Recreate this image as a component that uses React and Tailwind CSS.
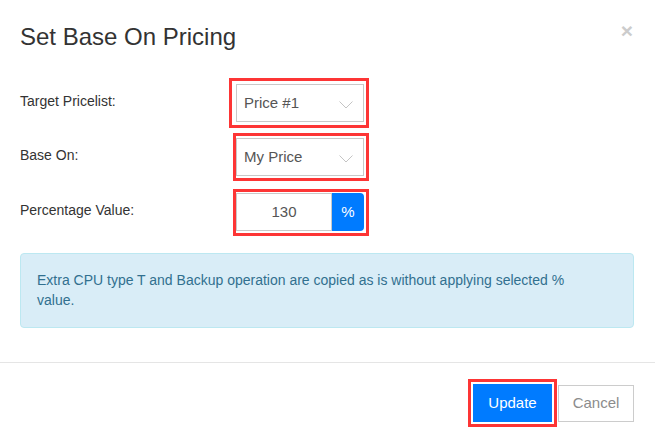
import React from "react";

function Chevron() {
  return (
    <svg width="14" height="8" viewBox="0 0 14 8" className="mt-[4px]">
      <polyline points="0.5,0.5 7,7 13.5,0.5" fill="none" stroke="#c4c4c4" strokeWidth="1" />
    </svg>
  );
}

function Select({ value }) {
  return (
    <div className="w-[128px] h-[38px] border border-[#c9c9c9] bg-white flex items-center justify-between pl-[7px] pr-[10px] text-[15px] text-[#555]">
      <span>{value}</span>
      <Chevron />
    </div>
  );
}

export default function App() {
  return (
    <div className="w-[655px] h-[439px] bg-white overflow-hidden font-['Liberation_Sans',Arial,sans-serif] text-[#333]">
      <div className="flex items-start justify-between pl-[20px] pr-[22px] pt-[23px]">
        <h4 className="text-[24px] leading-[28px] text-[#333]">Set Base On Pricing</h4>
        <span className="-mt-[3px] text-[21px] font-bold leading-[21px] text-[#cccccc]">×</span>
      </div>

      <div className="pl-[20px] pr-[21px]">
        <div className="mt-[27px] flex items-center">
          <div className="w-[209px] text-[14px] -mt-[4px]">Target Pricelist:</div>
          <div className="border-[3px] border-[#fd3535] pt-[3px] pb-[3px] pl-[4px] pr-[2px]">
            <Select value="Price #1" />
          </div>
        </div>

        <div className="mt-[5px] flex items-center">
          <div className="w-[213px] text-[14px] -mt-[3px]">Base On:</div>
          <div className="border-[3px] border-[#fd3535] pt-[2px] pb-[2px] pl-0 pr-[2px]">
            <Select value="My Price" />
          </div>
        </div>

        <div className="mt-[8px] flex items-center">
          <div className="w-[213px] text-[14px] -mt-[4px]">Percentage Value:</div>
          <div className="border-[3px] border-[#fd3535] pt-[1px] pb-[2px] pl-0 pr-[2px]">
            <div className="flex h-[38px]">
              <div className="w-[96px] h-[38px] border border-[#c9c9c9] bg-white flex items-center justify-center text-[15px] text-[#555]">
                130
              </div>
              <div className="w-[32px] h-[38px] bg-[#007bff] rounded-tr-[4px] rounded-br-[4px] flex items-center justify-center text-[15px] text-white">
                %
              </div>
            </div>
          </div>
        </div>

        <div className="mt-[17px] rounded-[4px] border border-[#bce8f1] bg-[#d9edf7] pt-[16px] pb-[17px] pl-[16px] pr-[30px] text-[14px] leading-[20px] text-[#31708f]">
          Extra CPU type T and Backup operation are copied as is without applying selected % value.
        </div>
      </div>

      <div className="mt-[34px] border-t border-[#e5e5e5] pt-[16px] pr-[21px] flex justify-end items-start">
        <div className="border-[3px] border-[#fd3535] p-[2px]">
          <div className="w-[79px] h-[38px] bg-[#007bff] text-white text-[15px] flex items-center justify-center">
            Update
          </div>
        </div>
        <div className="ml-[1px] mt-[6px] w-[76px] h-[37px] border border-[#cccccc] bg-white text-[#8c8c8c] text-[15px] flex items-center justify-center">
          Cancel
        </div>
      </div>
    </div>
  );
}
